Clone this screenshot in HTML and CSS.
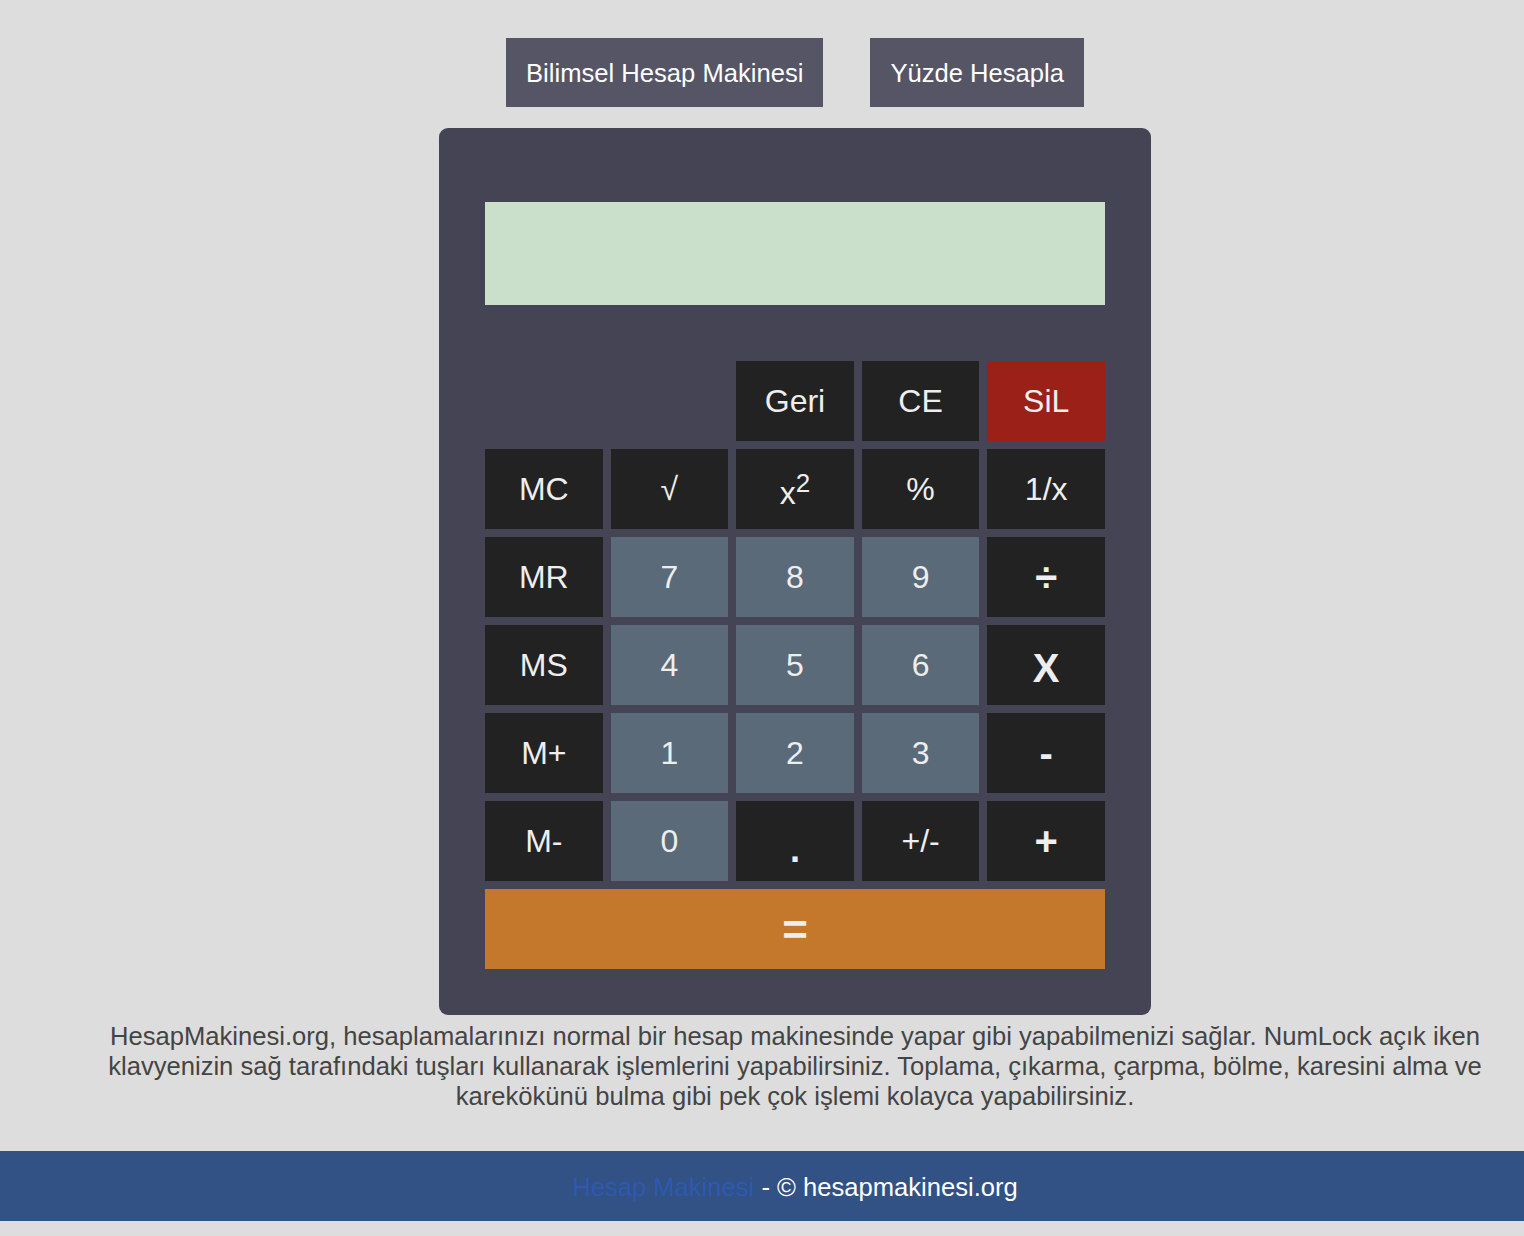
FILE: index.html
```html
<!DOCTYPE html>
<html lang="tr">
<head>
<meta charset="utf-8">
<title>Hesap Makinesi</title>
<link rel="stylesheet" href="styles.css">
</head>
<body>
<main class="main">
  <nav class="top-links">
    <a class="top-btn" href="#">Bilimsel Hesap Makinesi</a>
    <a class="top-btn" href="#">Yüzde Hesapla</a>
  </nav>
  <section class="calc">
    <div class="display"></div>
    <div class="keys">
      <span class="blank"></span>
      <span class="blank"></span>
      <button class="key">Geri</button>
      <button class="key">CE</button>
      <button class="key key-red">SiL</button>

      <button class="key">MC</button>
      <button class="key">√</button>
      <button class="key key-sq"><span>x<sup class="sq">2</sup></span></button>
      <button class="key">%</button>
      <button class="key">1/x</button>

      <button class="key">MR</button>
      <button class="key key-num">7</button>
      <button class="key key-num">8</button>
      <button class="key key-num">9</button>
      <button class="key key-op">÷</button>

      <button class="key">MS</button>
      <button class="key key-num">4</button>
      <button class="key key-num">5</button>
      <button class="key key-num">6</button>
      <button class="key key-op key-mul">X</button>

      <button class="key">M+</button>
      <button class="key key-num">1</button>
      <button class="key key-num">2</button>
      <button class="key key-num">3</button>
      <button class="key key-op">-</button>

      <button class="key">M-</button>
      <button class="key key-num">0</button>
      <button class="key key-dot">.</button>
      <button class="key">+/-</button>
      <button class="key key-op">+</button>

      <button class="key key-eq">=</button>
    </div>
  </section>
  <p class="desc">HesapMakinesi.org, hesaplamalarınızı normal bir hesap makinesinde yapar gibi yapabilmenizi sağlar. NumLock açık iken klavyenizin sağ tarafındaki tuşları kullanarak işlemlerini yapabilirsiniz. Toplama, çıkarma, çarpma, bölme, karesini alma ve karekökünü bulma gibi pek çok işlemi kolayca yapabilirsiniz.</p>
</main>
<footer class="footer">
  <div class="footer-inner"><a class="footer-link" href="#">Hesap Makinesi</a> - © hesapmakinesi.org</div>
</footer>
</body>
</html>
```

FILE: styles.css
```css
html, body {
  margin: 0;
  padding: 0;
}
body {
  background: #dddddd;
  font-family: "Liberation Sans", Arial, Helvetica, sans-serif;
  padding-bottom: 15px;
}
.main {
  width: 1390px;
  margin-left: 100px;
  padding-top: 38px;
  display: flex;
  flex-direction: column;
  align-items: center;
}
.top-links {
  display: flex;
  gap: 47px;
  margin-bottom: 21px;
}
.top-btn {
  display: block;
  background: #555566;
  color: #ffffff;
  text-decoration: none;
  font-size: 25.6px;
  line-height: 29px;
  padding: 21px 20px 19px;
}
.calc {
  width: 620px;
  background: #444455;
  border-radius: 9px;
  padding: 74px 46px 46px;
}
.display {
  height: 103px;
  background: #cbe0ca;
  margin-bottom: 56px;
}
.keys {
  display: grid;
  grid-template-columns: repeat(5, 1fr);
  grid-auto-rows: 80px;
  gap: 8px;
}
.key {
  border: none;
  margin: 0;
  padding: 0;
  background: #222222;
  color: #eeeeee;
  font-family: "Liberation Sans", Arial, Helvetica, sans-serif;
  font-size: 32px;
  line-height: 37px;
  display: flex;
  align-items: center;
  justify-content: center;
  cursor: pointer;
}
.key-red {
  background: #9b2017;
}
.key-num {
  background: #5a6a78;
}
.key-op {
  font-weight: bold;
  font-size: 40px;
}
.key-mul {
  padding-top: 6px;
}
.key-dot {
  font-weight: bold;
  font-size: 36px;
  padding-top: 16px;
}
.key-sq {
  padding-top: 8px;
}
.key-eq {
  grid-column: 1 / -1;
  background: #c4782b;
  font-weight: bold;
  font-size: 44px;
}
.sq {
  font-size: 26px;
  line-height: 0;
  vertical-align: 12px;
}
.desc {
  margin: 6px 0 0;
  font-size: 25.6px;
  line-height: 30px;
  color: #444444;
  text-align: center;
}
.footer {
  margin-top: 40px;
  background: #325184;
  height: 70px;
  display: flex;
  align-items: center;
  justify-content: center;
  padding-left: 66px;
}
.footer-inner {
  color: #ffffff;
  font-size: 25.6px;
  line-height: 30px;
  padding-top: 2px;
}
.footer-link {
  color: #2d5ab0;
  text-decoration: none;
}
```
